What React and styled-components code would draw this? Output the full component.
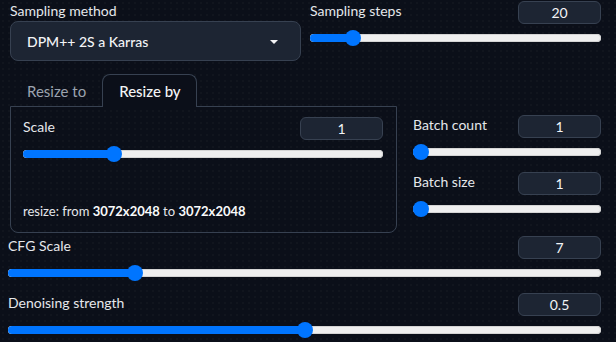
import React from "react"
import styled, { createGlobalStyle } from "styled-components"

const GlobalStyle = createGlobalStyle`
  html, body {
    margin: 0;
    padding: 0;
    background: #0b0f19;
  }
  body {
    font-family: Lato, "Noto Sans", sans-serif;
    color: #e5e7eb;
  }
`

const THUMB = 16

const Slider = ({ value }) => (
  <Track>
    <Fill style={{ width: `calc(${value} * (100% - ${THUMB}px) + ${THUMB / 2}px)` }} />
    <Thumb style={{ left: `calc(${value} * (100% - ${THUMB}px))` }} />
  </Track>
)

const SliderBlock = ({ label, value, pos, gap }) => (
  <Block $gap={gap}>
    <Head>
      <Label>{label}</Label>
      <NumberBox>{value}</NumberBox>
    </Head>
    <Slider value={pos} />
  </Block>
)

const App = () => {
  return (
    <Page>
      <GlobalStyle />
      <TopRow>
        <LeftCol>
          <Label>Sampling method</Label>
          <Dropdown>
            <span>DPM++ 2S a Karras</span>
            <Caret />
          </Dropdown>
        </LeftCol>
        <RightCol>
          <SliderBlock label="Sampling steps" value="20" pos={0.1275} />
        </RightCol>
      </TopRow>

      <MidRow>
        <TabGroup>
          <TabBar>
            <Tab>Resize to</Tab>
            <Tab $active>Resize by</Tab>
          </TabBar>
          <Panel>
            <SliderBlock label="Scale" value="1" pos={0.24} />
            <ResizeNote>
              resize: from <b>3072x2048</b> to <b>3072x2048</b>
            </ResizeNote>
          </Panel>
        </TabGroup>
        <SideCol>
          <SliderBlock label="Batch count" value="1" pos={0} gap={12} />
          <SliderBlock label="Batch size" value="1" pos={0} />
        </SideCol>
      </MidRow>

      <Bottom>
        <SliderBlock label="CFG Scale" value="7" pos={0.207} gap={12} />
        <SliderBlock label="Denoising strength" value="0.5" pos={0.5} />
      </Bottom>
    </Page>
  )
}

export default App

const Page = styled.div`
  width: 616px;
  height: 342px;
  box-sizing: border-box;
  padding: 1px 15px 0 8px;
  overflow: hidden;
  background-color: #0b0f19;
  background-image: radial-gradient(rgba(255, 255, 255, 0.05) 0.6px, transparent 0.8px);
  background-size: 6px 6px;
`

const TopRow = styled.div`
  display: flex;
  gap: 9px;
  padding-left: 2px;
`

const LeftCol = styled.div`
  width: 291px;
  display: flex;
  flex-direction: column;
  gap: 1px;
`

const RightCol = styled.div`
  flex: 1;
`

const Label = styled.div`
  font-size: 14px;
  line-height: 18px;
  color: #e5e7eb;
  margin-top: 1px;
`

const Dropdown = styled.div`
  height: 40px;
  box-sizing: border-box;
  display: flex;
  align-items: center;
  justify-content: space-between;
  padding: 0 22px 0 16px;
  background: #1d2533;
  border: 1px solid #374151;
  border-radius: 8px;
  font-size: 14px;
  font-weight: 500;
  color: #f3f4f6;
`

const Caret = styled.span`
  width: 0;
  height: 0;
  border-left: 4px solid transparent;
  border-right: 4px solid transparent;
  border-top: 4px solid #f3f4f6;
  margin-top: 2px;
`

const Block = styled.div`
  display: flex;
  flex-direction: column;
  gap: 6px;
  margin-bottom: ${(p) => p.$gap || 0}px;
`

const Head = styled.div`
  display: flex;
  justify-content: space-between;
  align-items: flex-start;
`

const NumberBox = styled.div`
  width: 83px;
  height: 23px;
  box-sizing: border-box;
  display: flex;
  align-items: center;
  justify-content: center;
  background: #1d2533;
  border: 1px solid #374151;
  border-radius: 6px;
  font-size: 14px;
  color: #f3f4f6;
`

const Track = styled.div`
  position: relative;
  height: 16px;
  display: flex;
  align-items: center;

  &::before {
    content: "";
    position: absolute;
    left: 0;
    right: 0;
    top: 4px;
    height: 8px;
    border-radius: 4px;
    background: #efefef;
    box-shadow: inset 0 0 0 1px #d4d4d4;
  }
`

const Fill = styled.div`
  position: absolute;
  left: 0;
  top: 4px;
  height: 8px;
  border-radius: 4px;
  background: #0075ff;
  z-index: 1;
`

const Thumb = styled.div`
  position: absolute;
  top: 0;
  width: ${THUMB}px;
  height: ${THUMB}px;
  border-radius: 50%;
  background: #0075ff;
  z-index: 2;
`

const MidRow = styled.div`
  display: flex;
  gap: 16px;
  margin-top: 13px;
  padding-left: 2px;
`

const TabGroup = styled.div`
  width: 387px;
  display: flex;
  flex-direction: column;
`

const TabBar = styled.div`
  display: flex;
  height: 32px;
`

const Tab = styled.div`
  position: relative;
  z-index: 1;
  box-sizing: border-box;
  height: 33px;
  padding: 0 15px 0 16px;
  display: flex;
  align-items: center;
  font-size: 15px;
  font-weight: ${(p) => (p.$active ? 500 : 400)};
  color: ${(p) => (p.$active ? "#f3f4f6" : "#9ca3af")};
  background: ${(p) => (p.$active ? "#0b0f19" : "transparent")};
  border: 1px solid ${(p) => (p.$active ? "#374151" : "transparent")};
  border-bottom: none;
  border-radius: 8px 8px 0 0;
`

const Panel = styled.div`
  height: 127px;
  box-sizing: border-box;
  padding: 10px 13px 0 12px;
  border: 1px solid #374151;
  border-radius: 0 0 8px 8px;
  display: flex;
  flex-direction: column;
`

const ResizeNote = styled.div`
  margin-top: 41px;
  font-size: 13px;
  color: #e5e7eb;

  b {
    font-weight: 700;
    color: #f9fafb;
  }
`

const SideCol = styled.div`
  flex: 1;
  padding-top: 41px;
`

const Bottom = styled.div`
  margin-top: 3px;
`
